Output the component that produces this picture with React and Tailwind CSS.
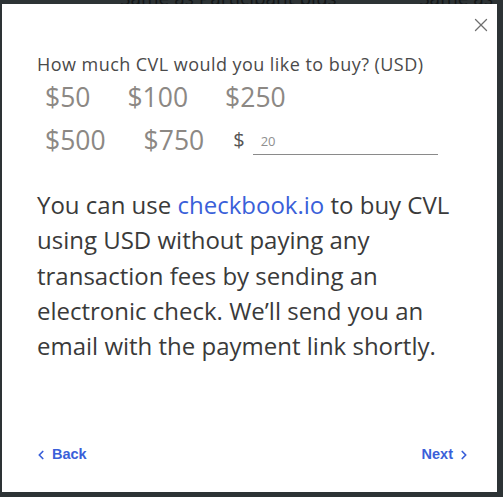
import React from 'react';
import { X, ChevronLeft, ChevronRight } from 'lucide-react';

const amounts = [['$50', '$100', '$250'], ['$500', '$750']];

const App = () => {
  return (
    <div className="relative w-[503px] h-[497px] overflow-hidden bg-[#2d3335] font-['Open_Sans',sans-serif]">
      {/* page behind the overlay */}
      <div className="flex justify-between pl-[120px] pr-[10px] -mt-[16px] text-[19px] text-[#141718]">
        <span>Same as Participant plus</span>
        <span>Same as</span>
      </div>

      {/* Modal */}
      <div className="absolute left-[2px] top-[4px] right-[6px] bottom-[5px] bg-white flex flex-col">
        <div className="flex justify-end pt-[10px] pr-[5px] h-[36px]">
          <X size={22} strokeWidth={1.4} className="text-[#6f6f6f]" />
        </div>

        <div className="pl-[35px] pr-[40px] mt-[12px]">
          <p className="text-[18px] leading-[24px] tracking-[0.45px] text-[#4a4a4a]">How much CVL would you like to buy? (USD)</p>

          <div className="flex gap-[37px] pl-[8px] mt-[3px] text-[26.5px] leading-[36px] text-[#8c8884]">
            {amounts[0].map((a) => (
              <span key={a}>{a}</span>
            ))}
          </div>
          <div className="flex items-center pl-[8px] mt-[7px] text-[26.5px] leading-[36px] text-[#8c8884]">
            <span>{amounts[1][0]}</span>
            <span className="ml-[38px]">{amounts[1][1]}</span>
            <span className="ml-[29px] text-[20px] text-[#555]">$</span>
            <div className="ml-[8px] w-[185px] border-b border-[#8a8a8a] pb-[4px] pt-[6px] pl-[8px] text-[13px] leading-[18px] text-[#8f8f8f]">
              20
            </div>
          </div>

          <p className="mt-[29px] text-[24px] leading-[35.25px] text-[#3a3a3a]">
            You can use <span className="text-[#3a5fd9]">checkbook.io</span> to buy CVL using USD without paying any transaction fees by sending an electronic check. We’ll send you an email with the payment link shortly.
          </p>
        </div>

        <div className="mt-auto flex justify-between pl-[32px] pr-[26px] pb-[26px] text-[14.5px] font-bold text-[#3a5fd9] font-['Liberation_Sans',sans-serif]">
          <span className="flex items-center gap-[4px]">
            <ChevronLeft size={14} strokeWidth={3} />
            Back
          </span>
          <span className="flex items-center gap-[4px]">
            Next
            <ChevronRight size={14} strokeWidth={3} />
          </span>
        </div>
      </div>
    </div>
  );
};

export default App;
